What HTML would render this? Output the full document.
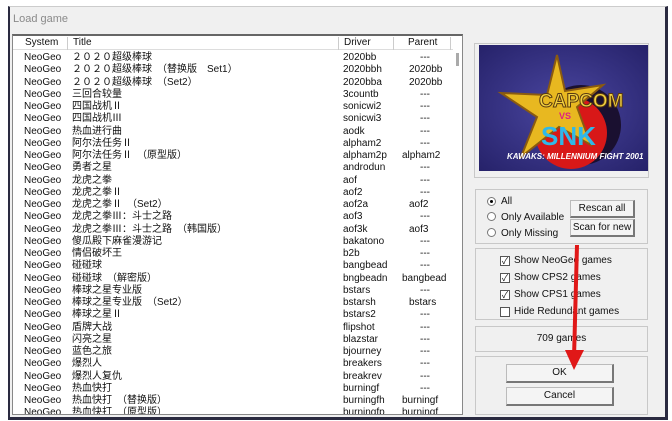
<!DOCTYPE html>
<html><head><meta charset="utf-8"><style>
*{margin:0;padding:0;box-sizing:border-box}
body{width:672px;height:421px;overflow:hidden;background:#fff;font-family:"Liberation Sans","Noto Sans CJK SC",sans-serif;font-size:10px;color:#111;position:relative}
.win{position:absolute;left:8px;top:6px;width:660px;height:414px;background:#f0f0f0;border-left:2px solid #2a2a40;border-right:3px solid #2a2a40;border-bottom:3px solid #2a2a40;border-top:1px solid #ccc}
.title{position:absolute;left:13px;top:13px;color:#8a8a8a;font-size:11px}
.list{position:absolute;left:12px;top:34px;width:451px;height:381px;background:#fff;border:1px solid #888;border-top:2px solid #666;overflow:hidden}
.hdr{position:absolute;left:0;top:0;height:14px;width:440px;border-bottom:1px solid #ddd;background:#fff}
.hdr span{position:absolute;top:1px;height:13px;border-right:1px solid #ccc}
.row{position:absolute;left:0;height:12px;width:440px;white-space:nowrap;line-height:12px}
.row span{position:absolute;top:0}
.sb{position:absolute;left:443px;top:17px;width:3px;height:13px;background:#aaa}
.grp{position:absolute;border:1px solid #c8c8c8;background:#f0f0f0}
.btn{position:absolute;background:#f4f4f4;border:1px solid #bbb;border-right:2px solid #777;border-bottom:2px solid #777;text-align:center;font-size:10px}
.cb{position:absolute;width:10px;height:10px;border:1px solid #555;background:#fff;font-size:9px;line-height:8px;text-align:center}
.rd{position:absolute;width:9px;height:9px;border-radius:50%;border:1px solid #777;background:#fff}
</style></head><body>
<div class="win"></div>
<div class="title">Load game</div>
<div class="list">
<div class="hdr">
<span style="left:0;width:55px;padding-left:12px">System</span>
<span style="left:55px;width:271px;padding-left:5px">Title</span>
<span style="left:326px;width:55px;padding-left:5px">Driver</span>
<span style="left:381px;width:57px;padding-left:14px">Parent</span>
</div>
<div class="sb"></div>
<div id="rows"></div>
</div>
<script>
const d=[["２０２０超级棒球","2020bb","---"],["２０２０超级棒球　（替换版　Set1）","2020bbh","2020bb"],["２０２０超级棒球　（Set2）","2020bba","2020bb"],["三回合较量","3countb","---"],["四国战机Ⅱ","sonicwi2","---"],["四国战机Ⅲ","sonicwi3","---"],["热血进行曲","aodk","---"],["阿尔法任务Ⅱ","alpham2","---"],["阿尔法任务Ⅱ　（原型版）","alpham2p","alpham2"],["勇者之星","androdun","---"],["龙虎之拳","aof","---"],["龙虎之拳Ⅱ","aof2","---"],["龙虎之拳Ⅱ　（Set2）","aof2a","aof2"],["龙虎之拳Ⅲ：斗士之路","aof3","---"],["龙虎之拳Ⅲ：斗士之路　（韩国版）","aof3k","aof3"],["傻瓜殿下麻雀漫游记","bakatono","---"],["情侣破坏王","b2b","---"],["碰碰球","bangbead","---"],["碰碰球　（解密版）","bngbeadn","bangbead"],["棒球之星专业版","bstars","---"],["棒球之星专业版　（Set2）","bstarsh","bstars"],["棒球之星Ⅱ","bstars2","---"],["盾牌大战","flipshot","---"],["闪亮之星","blazstar","---"],["蓝色之旅","bjourney","---"],["爆烈人","breakers","---"],["爆烈人复仇","breakrev","---"],["热血快打","burningf","---"],["热血快打　（替换版）","burningfh","burningf"],["热血快打　（原型版）","burningfp","burningf"]];
let h="";d.forEach((r,i)=>{const t=16+i*12.25;h+=`<div class="row" style="top:${t}px"><span style="left:11px">NeoGeo</span><span style="left:59px">${r[0]}</span><span style="left:330px">${r[1]}</span><span style="left:${r[2]=='---'?407:r[2].length>6?389:396}px">${r[2]}</span></div>`});
document.getElementById('rows').innerHTML=h;
</script>
<div class="grp" style="left:474px;top:43px;width:175px;height:135px;background:#f0f0f0"></div>
<svg style="position:absolute;left:479px;top:45px" width="169" height="126" viewBox="0 0 169 126">
<defs><radialGradient id="g" cx="50%" cy="50%" r="70%"><stop offset="0" stop-color="#4a46a0"/><stop offset="1" stop-color="#26226a"/></radialGradient></defs>
<rect width="169" height="126" fill="url(#g)"/>
<circle cx="102" cy="80" r="40" fill="#1a1030"/>
<circle cx="92" cy="88" r="36" fill="#d81818"/>
<polygon points="78,10 68,50 22,48 58,72 42,112 80,82 112,100 98,62 124,40 86,46" fill="#e8b820" stroke="#8a5a10" stroke-width="2"/>
<text x="60" y="62" font-family="Liberation Sans" font-weight="bold" font-size="19" fill="#f0d040" stroke="#5a3a10" stroke-width="1">CAPCOM</text>
<text x="80" y="74" font-family="Liberation Sans" font-weight="bold" font-size="9" fill="#e02080">VS</text>
<text x="62" y="100" font-family="Liberation Sans" font-weight="bold" font-size="26" fill="#30b8e8">SNK</text>
<text x="28" y="114" font-family="Liberation Sans" font-style="italic" font-weight="bold" font-size="8" fill="#fff">KAWAKS: MILLENNIUM FIGHT 2001</text>
</svg>
<div class="grp" style="left:475px;top:189px;width:173px;height:55px"></div>
<div class="rd" style="left:487px;top:197px"><div style="width:3px;height:3px;background:#000;border-radius:50%;margin:2px"></div></div>
<div style="position:absolute;left:501px;top:196px">All</div>
<div class="rd" style="left:487px;top:212px"></div>
<div style="position:absolute;left:501px;top:212px">Only Available</div>
<div class="rd" style="left:487px;top:228px"></div>
<div style="position:absolute;left:501px;top:228px">Only Missing</div>
<div class="btn" style="left:570px;top:200px;width:65px;height:18px;line-height:15px">Rescan all</div>
<div class="btn" style="left:570px;top:219px;width:65px;height:18px;line-height:15px">Scan for new</div>
<div class="grp" style="left:475px;top:248px;width:173px;height:72px"></div>
<div class="cb" style="left:500px;top:256px">✓</div><div style="position:absolute;left:514px;top:255px">Show NeoGeo games</div>
<div class="cb" style="left:500px;top:273px">✓</div><div style="position:absolute;left:514px;top:272px">Show CPS2 games</div>
<div class="cb" style="left:500px;top:290px">✓</div><div style="position:absolute;left:514px;top:289px">Show CPS1 games</div>
<div class="cb" style="left:500px;top:307px"></div><div style="position:absolute;left:514px;top:306px">Hide Redundant games</div>
<div class="grp" style="left:475px;top:326px;width:173px;height:26px;text-align:center;line-height:24px">709 games</div>
<div class="grp" style="left:475px;top:356px;width:173px;height:59px"></div>
<div class="btn" style="left:506px;top:364px;width:108px;height:19px;line-height:16px">OK</div>
<div class="btn" style="left:506px;top:387px;width:108px;height:19px;line-height:16px">Cancel</div>
<svg style="position:absolute;left:560px;top:240px" width="30" height="140"><line x1="17" y1="5" x2="14" y2="118" stroke="#e01818" stroke-width="4"/><polygon points="5,110 24,110 14,130" fill="#e01818"/></svg>
</body></html>
